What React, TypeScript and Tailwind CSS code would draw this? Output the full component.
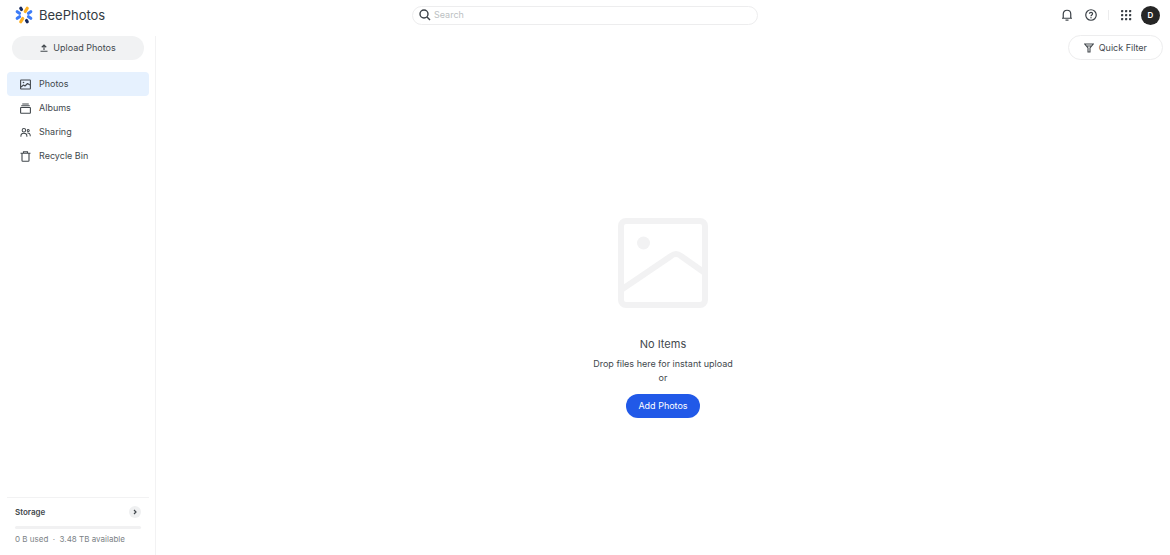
import type { ReactNode } from 'react';

interface NavItem {
  label: string;
  icon: ReactNode;
}

function BeeLogo() {
  return (
    <svg width="18" height="18" viewBox="0 0 36 36" fill="none" strokeWidth="6.4" strokeLinecap="round" aria-hidden="true">
      <path d="M4.5 11.5L9 14.5M4.5 24.5L9 21.5" stroke="#3b7bf8" />
      <path d="M31.5 11.5L27 14.5M31.5 24.5L27 21.5" stroke="#3b7bf8" />
      <path d="M11.5 4.5L13 7" stroke="#16285c" />
      <path d="M24.5 4.5L20.5 11" stroke="#fdb022" />
      <path d="M11.5 31.5L15.5 25" stroke="#fdb022" />
      <path d="M24.5 31.5L23 29" stroke="#16285c" />
    </svg>
  );
}

function PictureIcon() {
  return (
    <svg width="11" height="11" viewBox="0 0 22 22" fill="none" stroke="currentColor" strokeWidth="2.2" aria-hidden="true">
      <rect x="1.2" y="2" width="19.6" height="18" rx="1" />
      <path d="M2 16L7 12L10 14L15 9L20 12" strokeLinejoin="round" />
      <circle cx="7" cy="7" r="1.6" fill="currentColor" stroke="none" />
    </svg>
  );
}

function AlbumIcon() {
  return (
    <svg width="11" height="11" viewBox="0 0 22 22" fill="none" stroke="currentColor" strokeWidth="2.2" aria-hidden="true">
      <rect x="1.2" y="9" width="19.6" height="11.5" rx="1" />
      <path d="M2.5 5.5H19.5M4.5 2H17.5" />
    </svg>
  );
}

function PeopleIcon() {
  return (
    <svg width="12" height="11" viewBox="0 0 24 22" fill="none" stroke="currentColor" strokeWidth="2.2" aria-hidden="true">
      <circle cx="8.5" cy="6" r="3.8" />
      <path d="M2 20V18C2 14.5 4.5 12.5 8.5 12.5S15 14.5 15 18V20" />
      <circle cx="18" cy="6.5" r="2.2" />
      <path d="M16 12C20 11.5 22.5 13.5 22.5 19" />
    </svg>
  );
}

function TrashIcon() {
  return (
    <svg width="11" height="11" viewBox="0 0 22 22" fill="none" stroke="currentColor" strokeWidth="2.2" aria-hidden="true">
      <path d="M1 4.5H21M7 4V1.5H15V4M4 5V19C4 20 4.5 20.5 5.5 20.5H16.5C17.5 20.5 18 20 18 19V5" />
    </svg>
  );
}

const navItems: NavItem[] = [
  { label: 'Photos', icon: <PictureIcon /> },
  { label: 'Albums', icon: <AlbumIcon /> },
  { label: 'Sharing', icon: <PeopleIcon /> },
  { label: 'Recycle Bin', icon: <TrashIcon /> },
];

function Header() {
  return (
    <header className="grid grid-cols-[1fr_346px_1fr] items-center h-[30px] px-[10px]">
      <div className="flex items-center gap-[6px] pl-[5px]">
        <BeeLogo />
        <span className="text-[13px] leading-4 text-[#333b42]">BeePhotos</span>
      </div>

      <label className="flex items-center gap-[3px] h-[19px] px-[6px] rounded-full border border-[#ededee]">
        <svg width="12" height="12" viewBox="0 0 24 24" fill="none" stroke="#3b4147" strokeWidth="2.8" aria-hidden="true">
          <circle cx="10" cy="10" r="8" />
          <path d="M16 16L22 22" />
        </svg>
        <input
          type="text"
          aria-label="Search"
          placeholder="Search"
          className="flex-1 min-w-0 bg-transparent text-[9px] leading-3 outline-none placeholder:text-[#bcbfc2]"
        />
      </label>

      <div className="flex items-center justify-end text-[#3b4147]">
        <button type="button" aria-label="Notifications">
          <svg width="12" height="12" viewBox="0 0 24 24" fill="none" stroke="currentColor" strokeWidth="2.4" aria-hidden="true">
            <path d="M2 18.5H22M4.5 18V10C4.5 5.5 7.5 2.5 12 2.5S19.5 5.5 19.5 10V18" />
            <path d="M9 22.2H15" />
          </svg>
        </button>
        <button type="button" aria-label="Help" className="ml-3">
          <svg width="12" height="12" viewBox="0 0 24 24" fill="none" stroke="currentColor" strokeWidth="2.4" aria-hidden="true">
            <circle cx="12" cy="12" r="10.5" />
            <path d="M8.8 9.5C9 6 15.2 6 15.2 9.6C15.2 12 12 11.8 12 14.5" />
            <circle cx="12" cy="17.5" r="1.4" fill="currentColor" stroke="none" />
          </svg>
        </button>
        <div className="w-px h-[10px] mx-[11px] bg-[#ececed]" />
        <button type="button" aria-label="Apps">
          <svg width="12" height="12" viewBox="0 0 12 12" fill="currentColor" aria-hidden="true">
            {[1, 5, 9].map((y) =>
              [1, 5, 9].map((x) => <rect key={`${x}-${y}`} x={x} y={y} width="2.2" height="2.2" rx="0.4" />)
            )}
          </svg>
        </button>
        <button
          type="button"
          className="flex items-center justify-center w-[19px] h-[19px] ml-[9px] rounded-full bg-[#262626] text-white text-[8px] leading-3 font-semibold"
        >
          D
        </button>
      </div>
    </header>
  );
}

function Sidebar() {
  return (
    <aside className="flex flex-col w-[156px] shrink-0 mt-[6px] pl-[7px] pr-[6px] border-r border-[#f2f2f3]">
      <button
        type="button"
        className="flex items-center justify-center gap-[5px] h-6 mx-[5px] rounded-full bg-[#f1f2f3] text-[9px] leading-3"
      >
        <svg width="8" height="8" viewBox="0 0 16 16" fill="none" stroke="currentColor" strokeWidth="2.2" aria-hidden="true">
          <path d="M8 12V2M3.5 6.5L8 2L12.5 6.5M1 14.5H15" />
        </svg>
        Upload Photos
      </button>

      <nav className="flex flex-col mt-3">
        {navItems.map((item, index) => (
          <a
            key={item.label}
            href="#"
            className={`flex items-center gap-2 h-6 pl-[13px] rounded ${index === 0 ? 'bg-[#e6f1fe]' : ''}`}
          >
            <span className="flex w-[11px] justify-center">{item.icon}</span>
            <span className="text-[9px] leading-3">{item.label}</span>
          </a>
        ))}
      </nav>

      <section className="mt-auto px-2 pt-2 pb-[10px] border-t border-[#f2f2f3]">
        <div className="flex items-center justify-between">
          <h2 className="text-[8px] leading-3 font-semibold">Storage</h2>
          <button type="button" aria-label="Storage details" className="flex items-center justify-center w-3 h-3 rounded-full bg-[#eff0f1]">
            <svg width="6" height="6" viewBox="0 0 12 12" fill="none" stroke="currentColor" strokeWidth="2.4" aria-hidden="true">
              <path d="M4 2L8 6L4 10" />
            </svg>
          </button>
        </div>
        <div className="h-[3px] mt-2 rounded-full bg-[#f1f1f2]" />
        <p className="mt-1 text-[8px] leading-3 text-[#7c8286]">0 B used &nbsp;·&nbsp; 3.48 TB available</p>
      </section>
    </aside>
  );
}

export default function App() {
  return (
    <div className="flex flex-col min-h-screen bg-white text-[#42484d] font-['Inter',sans-serif]">
      <Header />
      <div className="flex flex-1">
        <Sidebar />
        <main className="flex flex-col flex-1 min-w-0">
          <div className="flex justify-end pt-[5px] pr-[7px]">
            <button
              type="button"
              className="flex items-center gap-[5px] h-[25px] px-[15px] rounded-full border border-[#ededee] text-[9px] leading-3"
            >
              <svg width="10" height="10" viewBox="0 0 20 20" fill="none" stroke="currentColor" strokeWidth="2.2" aria-hidden="true">
                <path d="M1.5 2H18.5L12 10V18H8V10L1.5 2ZM5 6H15" />
              </svg>
              Quick Filter
            </button>
          </div>

          <div className="flex flex-col flex-1 items-center justify-center pt-5">
            <svg width="90" height="90" viewBox="0 0 90 90" fill="none" stroke="#f2f2f3" strokeWidth="6" aria-hidden="true">
              <rect x="3" y="3" width="84" height="84" rx="5" />
              <path d="M3 72L53 38Q58 34 63 38L87 55" />
              <circle cx="25.5" cy="25" r="6.5" fill="#f2f2f3" stroke="none" />
            </svg>
            <h1 className="mt-7 text-[11px] leading-4">No Items</h1>
            <p className="mt-[5px] text-[9px] leading-[14px] text-center">
              Drop files here for instant upload
              <br />
              or
            </p>
            <button type="button" className="h-6 mt-[9px] px-3 rounded-full bg-[#2159e8] text-white text-[9px] leading-3">
              Add Photos
            </button>
          </div>
        </main>
      </div>
    </div>
  );
}
